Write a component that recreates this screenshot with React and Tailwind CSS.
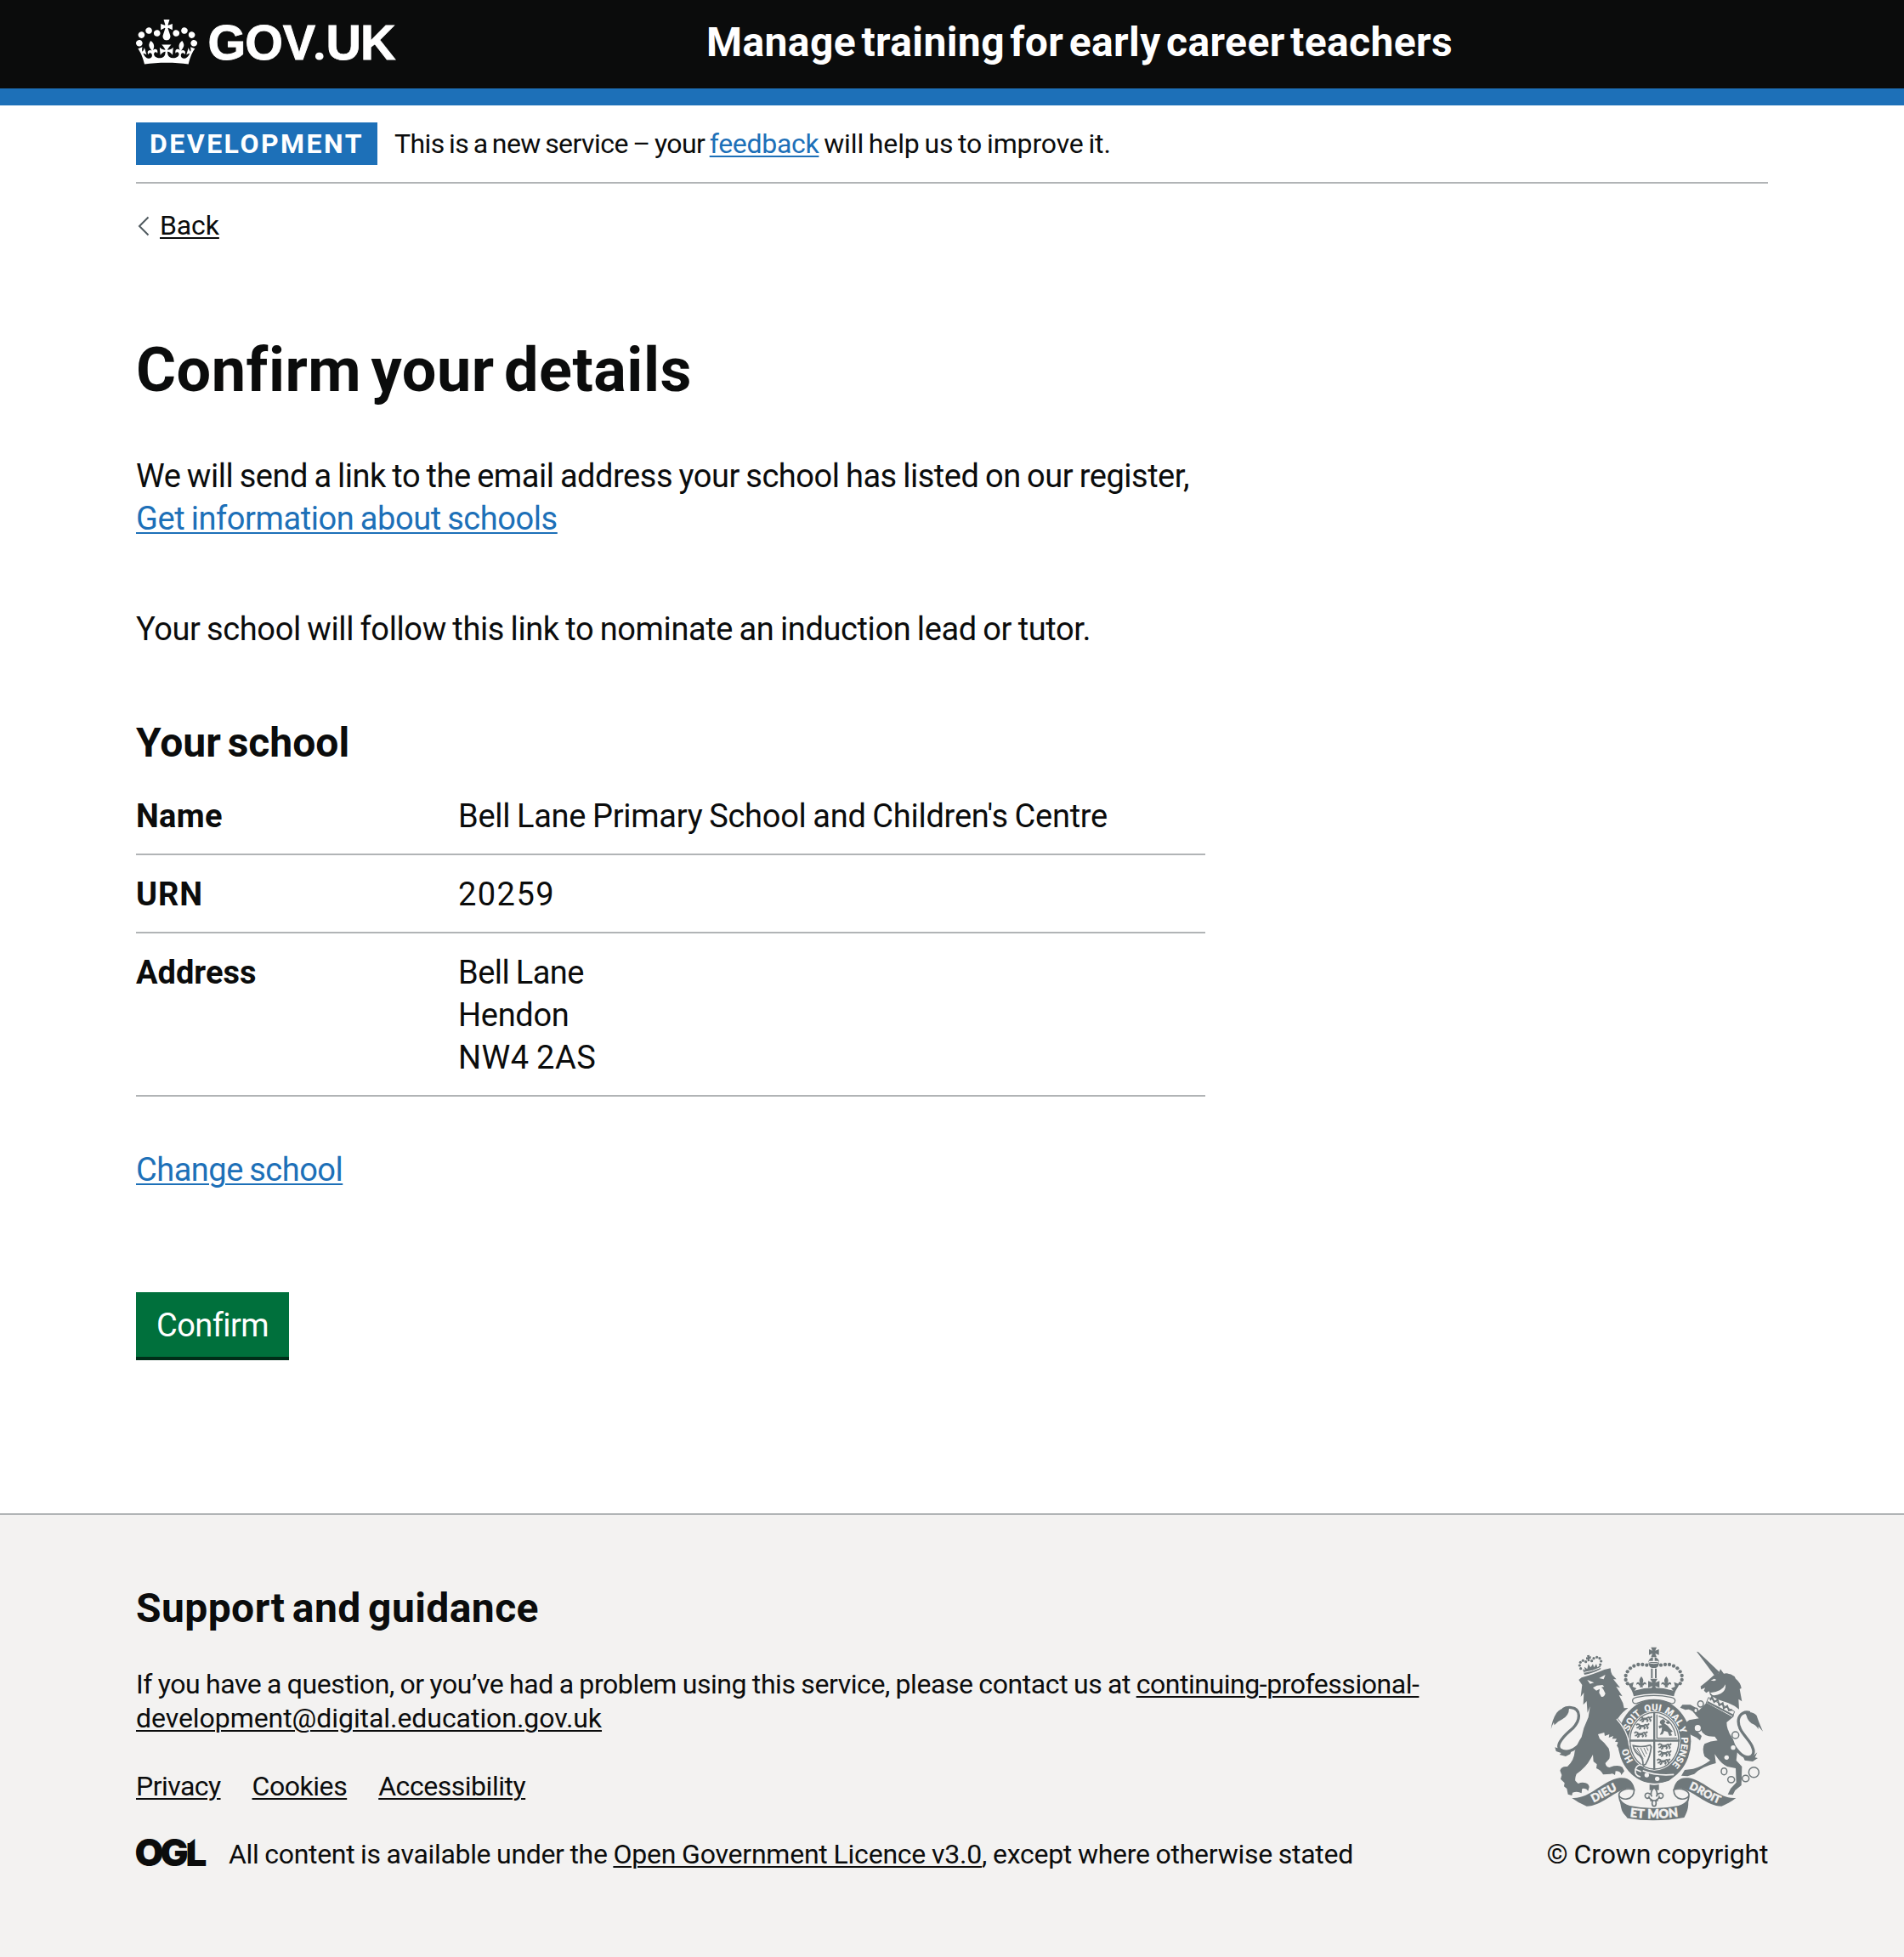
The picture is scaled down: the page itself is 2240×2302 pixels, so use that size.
import React from "react";

const INK = "#6f787b";
const PAPER = "#f3f2f1";

function CrownLogo() {
  return (
    <svg viewBox="0 0 132 97" className="mt-[23px] h-[53px] w-[72px] shrink-0 fill-white" aria-hidden="true">
      <path
        fillRule="evenodd"
        d="M25 30.2c3.5 1.5 7.7-.2 9.1-3.7 1.5-3.6-.2-7.8-3.9-9.2-3.6-1.4-7.6.3-9.1 3.9-1.4 3.5.3 7.5 3.9 9zM9 39.5c3.6 1.5 7.8-.2 9.2-3.7 1.5-3.6-.2-7.8-3.9-9.1-3.6-1.5-7.6.2-9.1 3.8-1.4 3.5.3 7.5 3.8 9zM4.4 57.2c3.5 1.5 7.7-.2 9.1-3.8 1.5-3.6-.2-7.7-3.9-9.1-3.5-1.5-7.6.3-9.1 3.8-1.4 3.5.3 7.6 3.9 9.1zm38.3-21.4c3.5 1.5 7.7-.2 9.1-3.8 1.5-3.6-.2-7.7-3.9-9.1-3.6-1.5-7.6.3-9.1 3.8-1.3 3.6.4 7.7 3.9 9.1zm64.4-5.6c-3.6 1.5-7.8-.2-9.1-3.7-1.5-3.6.2-7.8 3.8-9.2 3.6-1.4 7.7.3 9.2 3.9 1.3 3.5-.4 7.5-3.9 9zm15.9 9.3c-3.6 1.5-7.7-.2-9.1-3.7-1.5-3.6.2-7.8 3.7-9.1 3.6-1.5 7.7.2 9.2 3.8 1.5 3.5-.3 7.5-3.8 9zm4.7 17.7c-3.6 1.5-7.8-.2-9.2-3.8-1.5-3.6.2-7.7 3.9-9.1 3.6-1.5 7.7.3 9.2 3.8 1.3 3.5-.4 7.6-3.9 9.1zM89.3 35.8c-3.6 1.5-7.8-.2-9.2-3.8-1.4-3.6.2-7.7 3.9-9.1 3.6-1.5 7.7.3 9.2 3.8 1.4 3.6-.3 7.7-3.9 9.1zM69.7 17.7l8.9 4.7V9.3l-8.9 2.8c-.2-.3-.5-.6-.9-.9L72.4 0H59.6l3.5 11.2c-.3.3-.6.5-.9.9l-8.8-2.8v13.1l8.8-4.7c.3.3.6.7.9.9l-5 15.4v.1c-.2.8-.4 1.6-.4 2.4 0 4.1 3.1 7.5 7 8.1h.2c.3 0 .7.1 1 .1.4 0 .7 0 1-.1h.2c4-.6 7.1-4.1 7.1-8.1 0-.8-.1-1.7-.4-2.4V34l-5.1-15.4c.4-.2.7-.6 1-.9zM66 92.8c16.9 0 32.8 1.1 47.1 3.2 4-16.9 8.9-26.7 14-33.5l-9.6-3.4c1 4.9 1.1 7.2 0 10.2-1.5-1.4-3-4.3-4.2-8.7L108.6 76c2.8-2 5-3.2 7.5-3.3-4.4 9.4-10 11.9-13.6 11.2-4.3-.8-6.3-4.6-5.6-7.9 1-4.7 5.7-5.9 8-.5 4.3-8.7-3-11.4-7.6-8.8 7.1-7.2 7.9-13.5 2.1-21.1-8 6.1-8.1 12.3-4.5 20.8-4.7-5.4-12.1-2.5-9.5 6.2 3.4-5.2 7.9-2 7.2 3.1-.6 4.3-6.4 7.8-13.5 7.2-10.3-.9-10.9-8-11.2-13.8 2.5-.5 7.1 1.8 11 7.3L80.2 60c-4.1 4.4-8 5.3-12.3 5.4 1.4-4.4 8-11.6 8-11.6H55.5s6.4 7.2 7.9 11.6c-4.2-.1-8-1-12.3-5.4l1.4 16.4c3.9-5.5 8.5-7.7 10.9-7.3-.3 5.8-.9 12.8-11.1 13.8-7.2.6-12.9-2.9-13.5-7.2-.7-5 3.8-8.3 7.1-3.1 2.7-8.7-4.6-11.6-9.4-6.2 3.7-8.5 3.6-14.7-4.6-20.8-5.8 7.6-5 13.9 2.2 21.1-4.7-2.6-11.9.1-7.7 8.8 2.3-5.5 7.1-4.2 8.1.5.7 3.3-1.3 7.1-5.7 7.9-3.5.7-9-1.8-13.5-11.2 2.5.1 4.7 1.3 7.5 3.3l-4.7-15.4c-1.2 4.4-2.7 7.2-4.3 8.7-1.1-3-.9-5.3 0-10.2l-9.5 3.4c5 6.9 9.9 16.7 14 33.5 14.8-2.1 30.8-3.2 47.7-3.2z"
      />
    </svg>
  );
}

function Wordmark() {
  return (
    <svg viewBox="0 0 230 76" className="mt-[12px] ml-[11px] h-[76px] w-[230px] shrink-0 overflow-visible fill-white stroke-white">
      <text x="1.5 45.3 89.700" y="58" fontFamily="'Liberation Sans', sans-serif" fontWeight="700" fontSize="57.5" strokeWidth="0.9">
        GOV
        <tspan x="124.3" fontFamily="Roboto, sans-serif" fontSize="60" strokeWidth="0">.</tspan>
        <tspan x="140.5 181">UK</tspan>
      </text>
    </svg>
  );
}

function OglLogo() {
  return (
    <svg viewBox="0 0 86 50" className="-mt-[7px] h-[50px] w-[86px] shrink-0 overflow-visible fill-[#0b0c0c]">
      <text x="-1.5 28.5 58.5" y="41" fontFamily="Inter, sans-serif" fontWeight="900" fontSize="44">
        OGL
      </text>
      <path d="M60 7h11.500l-8.500 7h-3z" fill={PAPER} />
    </svg>
  );
}

const leftBeads = [[412, 116], [397, 114], [382, 114], [367, 119], [354, 127], [344, 139], [338, 153], [338, 168], [344, 181]];
const lionCrownBeads = [[179, 128], [175, 117], [178, 106], [187, 100], [197, 104], [218, 101], [225, 92], [236, 88], [246, 92], [251, 102], [248, 114]];

function Fleur({ x, y, s }) {
  return (
    <path
      transform={`translate(${x} ${y}) scale(${s})`}
      d="M0-20C9-10 8-2 4 5 10-4 20 0 17 10 14 5 9 7 9 11L4 12 6 18H-6L-4 12-9 11C-9 7-14 5-17 10-20 0-10-4-4 5-8-2-9-10 0-20Z"
    />
  );
}

function Passant({ x, y }) {
  return (
    <path
      transform={`translate(${x} ${y})`}
      d="M2 6 8 2 14 4 15 8 28 8 36 4 44 6M44 6 48 0M15 8 10 14 4 15M18 10 18 18 12 20M30 10 34 15 30 20M38 8 44 14 42 20M14 10 32 11"
      fill="none"
      stroke={INK}
      strokeWidth="5.5"
      strokeLinejoin="round"
    />
  );
}

function RoyalArms() {
  return (
    <svg viewBox="75 51 750 612" className="h-[204px] w-[250px] overflow-visible" fill={INK} aria-hidden="true">
      <defs>
        <path id="garter" d="M439 493A95 108 0 0 1 439 277A95 108 0 0 1 439 493" />
        <path id="ribbon-left" d="M212 606C250 592 285 564 330 547" />
        <path id="ribbon-mid" d="M340 649Q437 664 540 648" />
        <path id="ribbon-right" d="M549 548C590 559 625 592 672 607" />
        <clipPath id="shield"><ellipse cx="439" cy="383" rx="86" ry="100" /></clipPath>
      </defs>

      {/* Imperial crown */}
      <path d="M427 53h20l-5 12 13-5v20l-13-5 5 13h-20l5-13-12 5V60l12 5z" />
      <path d="M418 106a19 18 0 0 1 38 0q-19 6-38 0z" />
      <path d="M434 88h6v14h-6zM420 101h34v4h-34z" fill={PAPER} />
      <path d="M418 108q19 7 38 0-2 16-12 18h-14q-10-2-12-18z" />
      <path d="M427 128h6v34h-6zM441 128h6v34h-6z" />
      {leftBeads.map(([x, y]) => (
        <React.Fragment key={`${x}-${y}`}>
          <circle cx={x} cy={y} r="6.4" />
          <circle cx={874 - x} cy={y} r="6.4" />
        </React.Fragment>
      ))}
      <path d="M424 164h26l-8 14 15-6v24l-15-6 6 16h-22l6-16-15 6v-24l15 6z" />
      <Fleur x={393} y={176} s={1} />
      <Fleur x={481} y={176} s={1} />
      <path d="M347 183 366 176 362 192 376 198 368 206Q437 186 506 206L498 198 512 192 508 176 527 183C522 196 511 206 508 226Q437 208 366 226C363 206 352 196 347 183Z" />
      <path d="M375 230Q437 216 499 230 516 234 511 246 507 254 497 251 437 226 377 251 367 254 363 246 358 234 375 230Z" fill={PAPER} stroke={INK} strokeWidth="4" />

      {/* Garter */}
      <ellipse cx="439" cy="385" rx="129" ry="148" />
      <ellipse cx="439" cy="383" rx="91" ry="105" fill={PAPER} />
      <ellipse cx="439" cy="383" rx="86" ry="100" fill="none" stroke={INK} strokeWidth="4" />
      <g fontFamily="Roboto, sans-serif" fontWeight="900" fontSize="34" fill={PAPER} textAnchor="middle">
        <text><textPath href="#garter" startOffset="17.500%">HO</textPath></text>
        <text><textPath href="#garter" startOffset="36.5%">SOIT</textPath></text>
        <text><textPath href="#garter" startOffset="49.2%">QUI</textPath></text>
        <text><textPath href="#garter" startOffset="61%">MAL</textPath></text>
        <text><textPath href="#garter" startOffset="69%">Y</textPath></text>
        <text><textPath href="#garter" startOffset="81%">PENSE</textPath></text>
      </g>
      <path d="M366 478Q380 462 402 474L396 486Q420 500 462 496L510 508 490 524Q430 545 374 512Z" />
      <path d="M398 488Q446 508 508 502" fill="none" stroke={PAPER} strokeWidth="5" />
      <path d="M400 472Q378 462 372 484 368 506 390 510M372 484 392 492" fill="none" stroke={PAPER} strokeWidth="5" />
      <circle cx="412" cy="504" r="8" fill={PAPER} />
      <circle cx="449" cy="517" r="8" fill={PAPER} />

      {/* Quartered shield */}
      <g clipPath="url(#shield)">
        <Passant x={382} y={296} />
        <Passant x={372} y={322} />
        <Passant x={366} y={350} />
        <path d="M448 290V374H520" fill="none" stroke={INK} strokeWidth="4" />
        <path d="M454 296Q506 310 514 366" fill="none" stroke={INK} strokeWidth="4" />
        <path d="M460 312 470 306 478 314 474 322 486 330 496 342 504 350 496 354 502 364 492 366 486 352 474 348 468 360 458 362 464 350 466 336 456 340 454 330 466 328 458 320ZM478 318 490 312 494 322 486 324Z" />
        <path d="M364 400 Q394 408 424 398 L428 404 Q424 440 408 466 L398 470 Q402 452 388 436 Q368 424 364 400Z" fill="none" stroke={INK} strokeWidth="5" />
        <path d="M378 408 400 448M390 408 406 440M402 408 412 430M412 406 417 418M370 410 394 440" stroke={INK} strokeWidth="3" />
        <Passant x={450} y={392} />
        <Passant x={450} y={418} />
        <Passant x={446} y={446} />
      </g>
      <path d="M435 281h7v204h-7zM350 379h178v7H350z" />

      {/* Pendant */}
      <path d="M422 537q15 4 33 0v20h-33z" />
      <path d="M438 548C450 560 450 572 446 580 450 566 470 562 470 578 468 588 458 588 456 582 454 590 446 590 444 594L445 604Q445 614 438 614 431 614 431 604L432 594C430 590 422 590 420 582 418 588 408 588 406 578 406 562 426 566 430 580 426 572 426 560 438 548Z" fill={PAPER} stroke={INK} strokeWidth="5" />
      <path d="M424 594h28" stroke={INK} strokeWidth="5" />

      {/* Lion */}
      <g>
        <path d="M172 168 182 160Q230 146 262 132L284 127 286 140 290 150 305 166 294 166 318 196 304 192 326 226 314 222 328 250 332 268 346 267 326 292 312 306Q334 330 346 372L350 388 340 402 346 410 332 408 330 414 318 404 314 412 306 400 312 388 300 386 306 376 290 376 294 366 278 372 280 360 264 366 262 354 240 360 246 376Q262 388 278 410 284 430 280 446L266 462Q268 476 280 477L296 472Q316 468 326 476L333 490 322 504Q322 490 302 490L300 504Q292 496 284 500L258 502Q250 486 234 480L236 466 224 456 222 432 214 446Q198 476 164 500 158 514 160 524L170 534Q184 528 196 532 208 536 209 546L205 560Q198 548 184 552L182 568Q168 560 150 566L148 576 134 572 130 552 120 544 122 532 108 518 112 504 106 488Q110 472 132 474 156 452 158 420 168 390 182 370L190 338 206 300 212 262 203 284 200 243 188 256 190 213 179 228 184 186Z" />
        <path d="M312 306Q330 280 352 268" stroke={PAPER} strokeWidth="5" fill="none" />
        <path d="M350 400Q346 350 306 306" stroke={PAPER} strokeWidth="4" fill="none" />
        <path d="M202 168 226 178 212 182ZM244 162 266 150 260 166ZM222 196 236 188 256 186 262 192 252 194 258 200 266 216Q262 230 252 228L244 214 246 200 234 206Z" fill={PAPER} />
        <path d="M200 368C160 420 128 428 106 414 88 396 124 362 150 340 182 308 178 270 146 266 136 264 126 266 116 272" fill="none" stroke={INK} strokeWidth="10" />
        <path d="M74 342Q78 308 94 284 112 262 138 268 138 296 112 308 96 314 86 328L84 318Q78 328 74 342ZM88 406 102 410 120 422 148 412 142 430 126 438 104 432 110 426 92 420Z" />
        {lionCrownBeads.map(([x, y]) => <circle key={`${x}-${y}`} cx={x} cy={y} r="4.8" />)}
        <path d="M186 130 194 134 192 122 202 130 206 112 214 124 222 112 226 124 234 112 238 124 248 116 250 130Q220 146 192 150ZM201 82l9-2v6l5-2v10l-5-1 1 9-8 1v-8l-5 2v-9l5 1z" />
        <path d="M190 142Q222 138 250 124" stroke={PAPER} strokeWidth="3" fill="none" />
      </g>

      {/* Unicorn */}
      <g>
        <path d="M588 68 594 70 670 142 652 154Z" />
        <path d="M602 191 626 172 648 152 666 144 672 130 684 146Q704 142 722 156L726 164Q744 178 746 198L740 200 748 244 736 236 738 272 722 260 700 250 660 236 636 222 632 208 622 214 614 206 618 196 604 202Z" />
        <path d="M638 170 650 164 658 168 650 172ZM636 214Q678 210 690 184 692 206 674 216 660 224 644 222Z" fill={PAPER} />
        <path d="M628 244 720 296 694 318Q694 346 716 376L732 420 728 452 748 474 746 540 724 558 716 574 698 572 708 552 728 530 726 480 696 474Q676 464 662 444L652 430 656 462Q606 474 580 500L556 508 534 506 546 486 576 482Q610 472 636 452L616 438Q606 410 616 394 636 384 662 382L652 368Q612 370 602 342L590 350 606 366 600 382 588 372 568 362 554 346 546 322 562 310 596 304 586 294Q576 276 560 272L548 274 530 266 538 256 566 256Q584 264 596 276Z" />
        <path d="M630 230 722 280 714 300 622 250Z" fill={PAPER} stroke={INK} strokeWidth="3" />
        <path d="M626 246 718 294M636 240 642 228 650 246 662 238 668 258 680 250 684 268 696 260 702 276 714 274" stroke={INK} strokeWidth="6" fill="none" />
        <path d="M712 388C760 470 800 440 786 408 778 378 730 350 736 308 740 286 760 278 776 284" fill="none" stroke={INK} strokeWidth="10" />
        <path d="M758 284Q786 278 800 294 806 314 822 350L806 332 806 342Q796 326 782 322 768 312 764 294ZM748 430 764 444 784 440 802 424 794 442 804 444 786 456 758 452Z" />
      </g>
      <g fill={PAPER} stroke={INK} strokeWidth="4.5">
        <ellipse cx="602" cy="253" rx="10" ry="11" />
        <ellipse cx="585" cy="276" rx="7" ry="8" />
        <ellipse cx="592" cy="338" rx="13" ry="13" />
        <ellipse cx="725" cy="363" rx="12" ry="12" />
        <ellipse cx="685" cy="491" rx="10" ry="12" />
        <ellipse cx="710" cy="520" rx="12" ry="11" />
        <ellipse cx="761" cy="516" rx="12" ry="11" />
        <circle cx="790" cy="494" r="18" />
      </g>
      <circle cx="717" cy="407" r="8" fill={PAPER} />
      <circle cx="694" cy="442" r="8" fill={PAPER} />

      {/* Motto ribbon */}
      <path d="M148 585C210 590 258 522 316 514 350 510 366 530 370 556Q350 546 332 554C290 568 252 612 200 614Q170 602 148 585Z" />
      <path d="M727 585C665 590 617 522 559 514 525 510 511 530 506 556Q526 546 544 554C586 568 624 612 676 614Q706 602 727 585Z" />
      <path d="M368 556C366 600 318 592 314 576 312 560 340 546 368 556ZM314 578C316 606 332 610 334 636" fill="none" stroke={INK} strokeWidth="5" />
      <path d="M507 556C509 600 557 592 561 576 563 560 535 546 507 556ZM561 578C559 606 543 610 541 636" fill="none" stroke={INK} strokeWidth="5" />
      <path d="M318 588Q330 606 352 612 437 630 524 612 546 606 558 588C562 620 552 640 544 654Q437 672 344 656C334 640 320 640 318 588Z" />
      <g fontFamily="Lato, sans-serif" fontWeight="900" fill={PAPER} stroke={PAPER} strokeWidth="1.5" textAnchor="middle">
        <text fontSize="40"><textPath href="#ribbon-left" startOffset="46%">DIEU</textPath></text>
        <text fontSize="43" wordSpacing="3"><textPath href="#ribbon-mid" startOffset="49%">ET MON</textPath></text>
        <text fontSize="38"><textPath href="#ribbon-right" startOffset="52%">DROIT</textPath></text>
      </g>
    </svg>
  );
}

function Link({ className = "", children }) {
  return (
    <a href="#" className={`underline decoration-2 underline-offset-[3px] ${className}`}>
      {children}
    </a>
  );
}

function Row({ label, labelClass = "", children }) {
  return (
    <div className="flex border-b-2 border-[#b1b4b6] pt-[21px] pb-[19px]">
      <dt className={`w-[379px] shrink-0 font-bold ${labelClass}`}>{label}</dt>
      <dd>{children}</dd>
    </div>
  );
}

export default function App() {
  return (
    <div className="flex min-h-[2302px] w-full flex-col bg-white font-[Roboto,sans-serif] text-[38px] leading-[50px] [word-spacing:-1.5px] whitespace-nowrap text-[#0b0c0c]">
      <header className="h-[124px] border-b-[20px] border-[#1d70b8] bg-[#0b0c0c] px-40 text-white">
        <div className="flex h-[104px] items-start">
          <CrownLogo />
          <Wordmark />
          <p className="mt-[20px] ml-[358px] text-[48px] leading-[60px] font-bold tracking-[0.4px] [word-spacing:-6px]">
            Manage training for early career teachers
          </p>
        </div>
      </header>

      <div className="mx-40 flex h-[92px] items-start border-b-2 border-[#b1b4b6] pt-5 text-[32px] leading-10">
        <strong className="h-[50px] w-[284px] bg-[#1d70b8] pt-[5px] pl-4 font-bold tracking-[2.48px] text-white">
          DEVELOPMENT
        </strong>
        <p className="mt-[5px] ml-5 [word-spacing:-2px]">
          <span className="tracking-[-0.57px]">This is a new service – your </span>
          <Link className="tracking-[-0.3px] text-[#1d70b8]">feedback</Link>
          <span className="tracking-[-0.14px]"> will help us to improve it.</span>
        </p>
      </div>

      <div className="mx-40 mt-[29px] flex h-10 items-center text-[32px] leading-10">
        <svg viewBox="0 0 14 24" className="mt-[2px] ml-[2px] h-6 w-[14px] fill-none stroke-[#505a5f] stroke-2">
          <path d="M12.5 1.5 2 12l10.500 10.500" />
        </svg>
        <Link className="ml-3 tracking-[-0.12px]">Back</Link>
      </div>

      <main className="mx-40 flex w-[1258px] flex-col items-start">
        <h1 className="mt-[111px] text-[72px] leading-20 font-bold tracking-[0.5px] [word-spacing:-7px]">
          Confirm your details
        </h1>
        <p className="mt-[59px] tracking-[-0.47px]">
          We will send a link to the email address your school has listed on our register,
          <br />
          <Link className="tracking-[-0.43px] text-[#1d70b8]">Get information about schools</Link>
        </p>
        <p className="mt-20 tracking-[-0.39px]">
          Your school will follow this link to nominate an induction lead or tutor.
        </p>
        <h2 className="mt-[79px] text-[48px] leading-[60px] font-bold [word-spacing:-4px]">Your school</h2>
        <dl className="mt-[10px] w-full">
          <Row label="Name" labelClass="tracking-[0.3px]">
            <span className="tracking-[-0.25px]">Bell Lane Primary School and Children's Centre</span>
          </Row>
          <Row label="URN" labelClass="tracking-[0.9px]">
            <span className="tracking-[1.45px]">20259</span>
          </Row>
          <Row label="Address">
            <span className="tracking-[-0.5px]">Bell Lane</span>
            <br />
            <span className="tracking-[-0.3px]">Hendon</span>
            <br />
            <span className="tracking-[0.5px]">NW4 2AS</span>
          </Row>
        </dl>
        <Link className="mt-[61px] tracking-[-0.5px] text-[#1d70b8]">Change school</Link>
        <button className="mt-[119px] h-20 w-[180px] border-b-4 border-[#002d18] bg-[#00703c] pt-[2px] text-center tracking-[-0.6px] text-white">
          Confirm
        </button>
      </main>

      <footer className="mt-[180px] flex grow items-start justify-between border-t-2 border-[#b1b4b6] bg-[#f3f2f1] px-40 pt-20 text-[32px] leading-10 [word-spacing:-0.8px]">
        <div>
          <h2 className="text-[48px] leading-[60px] font-bold tracking-[0.42px] [word-spacing:-4px]">Support and guidance</h2>
          <p className="mt-[39px]">
            <span className="tracking-[-0.42px]">
              If you have a question, or you’ve had a problem using this service, please contact us at{" "}
              <Link className="tracking-[-0.46px]">continuing-professional-</Link>
            </span>
            <br />
            <Link className="tracking-[-0.06px]">development@digital.education.gov.uk</Link>
          </p>
          <nav className="mt-10 flex gap-[37px]">
            <Link className="tracking-[-0.55px]">Privacy</Link>
            <Link className="tracking-[-0.45px]">Cookies</Link>
            <Link className="tracking-[-0.47px]">Accessibility</Link>
          </nav>
          <div className="mt-10 flex h-10 items-start">
            <OglLogo />
            <p className="ml-[23px] tracking-[-0.32px]">
              All content is available under the{" "}
              <Link className="tracking-[-0.22px]">Open Government Licence v3.0</Link>
              <span className="tracking-[-0.27px]">, except where otherwise stated</span>
            </p>
          </div>
        </div>
        <div className="mt-[75px] flex w-[260px] flex-col items-center">
          <RoyalArms />
          <p className="mt-5 tracking-[-0.15px]">© Crown copyright</p>
        </div>
      </footer>
    </div>
  );
}
